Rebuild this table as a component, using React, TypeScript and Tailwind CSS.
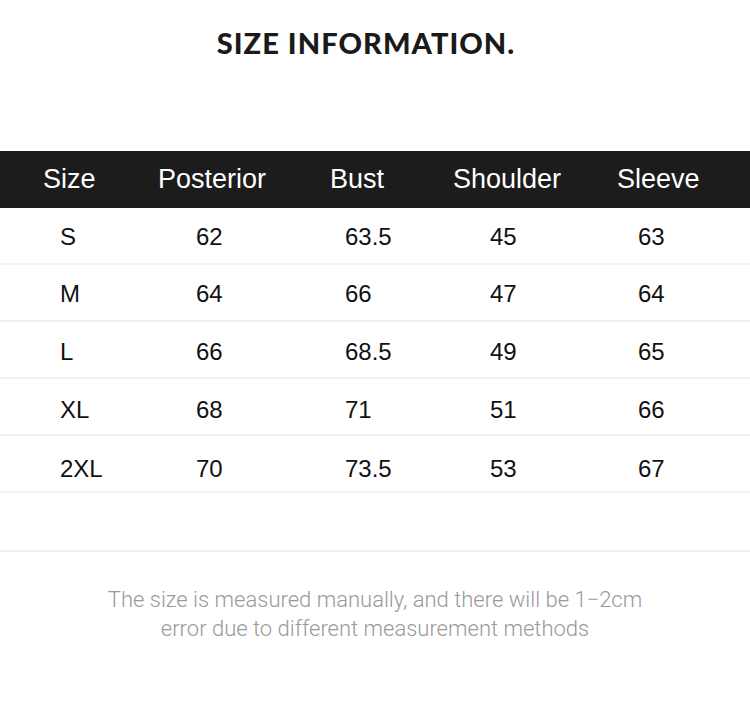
const headers = [
  { label: "Size", pad: "pl-[43px]" },
  { label: "Posterior", pad: "pl-[18px]" },
  { label: "Bust", pad: "pl-[30px]" },
  { label: "Shoulder", pad: "pl-[23px]" },
  { label: "Sleeve", pad: "pl-[27px]" },
];

const dataPads = ["pl-[60px]", "pl-[56px]", "pl-[45px]", "pl-[60px]", "pl-[48px]"];
const widths = ["w-[140px]", "w-[160px]", "w-[130px]", "w-[160px]", "w-[160px]"];
// text sits a little lower in each successive row of the original
const rowNudge = ["pt-[2px]", "pt-[3px]", "pt-[4px]", "pt-[7px]", "pt-[10px]"];

const rows = [
  ["S", "62", "63.5", "45", "63"],
  ["M", "64", "66", "47", "64"],
  ["L", "66", "68.5", "49", "65"],
  ["XL", "68", "71", "51", "66"],
  ["2XL", "70", "73.5", "53", "67"],
];

export default function App() {
  return (
    <div className="w-[750px] h-[721px] bg-white overflow-hidden font-['Liberation_Sans',Arial,sans-serif]">
      <h1 className="pt-[27px] pr-[18px] text-center text-[29px] leading-[32px] font-black tracking-[1.05px] text-[#1a1a1a] font-['Lato',sans-serif]">
        SIZE INFORMATION.
      </h1>

      <div className="mt-[92px]">
        <div className="flex h-[57px] items-center bg-[#1c1c1c] text-[27px] text-white">
          {headers.map((h, i) => (
            <div key={h.label} className={`${widths[i]} ${h.pad}`}>
              {h.label}
            </div>
          ))}
        </div>
        {rows.map((r, ri) => (
          <div
            key={r[0]}
            className={`flex h-[57px] items-center border-b-2 border-[#f1f1f1] text-[24px] text-[#111] ${rowNudge[ri]}`}
          >
            {r.map((v, i) => (
              <div key={i} className={`${widths[i]} ${dataPads[i]}`}>
                {v}
              </div>
            ))}
          </div>
        ))}
        <div className="h-[59px] border-b-2 border-[#f1f1f1]" />
      </div>

      <p className="mt-[33px] text-center text-[22px] leading-[29px] font-light text-[#9a9a9a] font-['Roboto',sans-serif]">
        The size is measured manually, and there will be 1−2cm
        <br />
        error due to different measurement methods
      </p>
    </div>
  );
}
